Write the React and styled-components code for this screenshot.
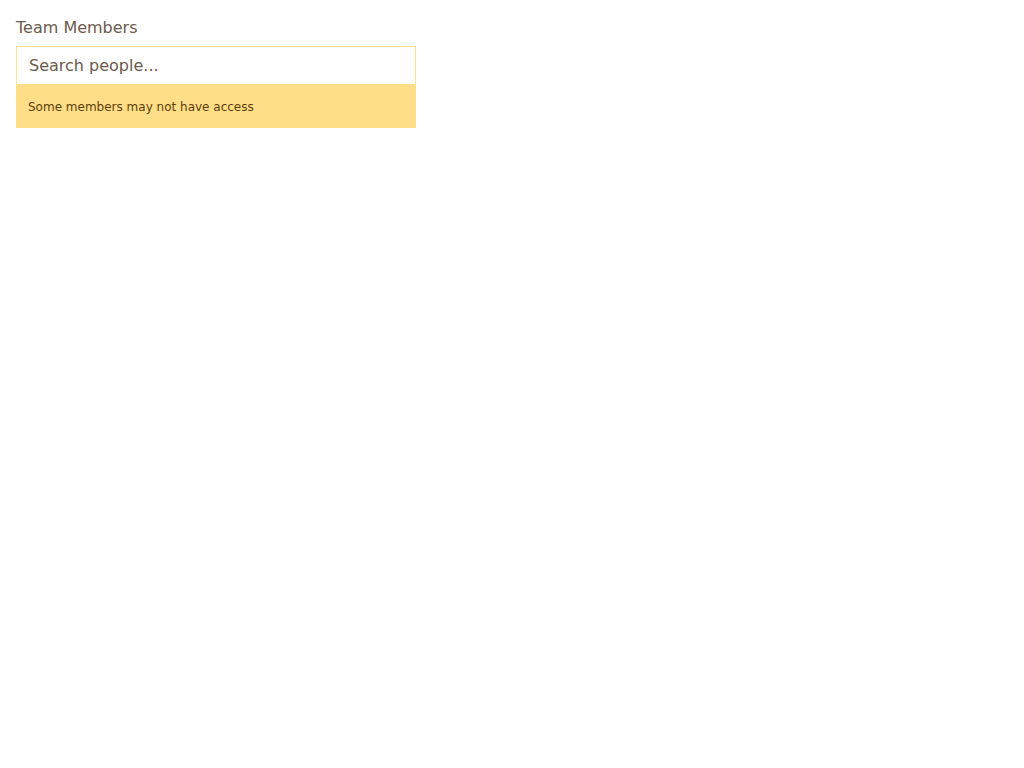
import React from "react";
import styled, { createGlobalStyle } from "styled-components";

const GlobalStyle = createGlobalStyle`
  body {
    margin: 0;
    background: #ffffff;
    font-family: "DejaVu Sans", sans-serif;
  }
`;

const Page = styled.div`
  padding: 16px;
`;

const Field = styled.div`
  width: 400px;
  display: flex;
  flex-direction: column;
`;

const Label = styled.label`
  display: block;
  font-size: 16px;
  line-height: 24px;
  color: #6b5a4b;
  margin-bottom: 6px;
`;

const SearchInput = styled.input`
  box-sizing: border-box;
  width: 100%;
  height: 39px;
  padding: 0 12px;
  border: 1px solid #fde08b;
  background: #ffffff;
  font-family: "DejaVu Sans", sans-serif;
  font-size: 16px;
  color: #5a4a3c;
  outline: none;

  &::placeholder {
    color: #6b5a4b;
  }
`;

const Notice = styled.div`
  background: #ffde88;
  color: #5c3d0a;
  font-size: 12px;
  line-height: 18px;
  padding: 13px 12px 12px;
`;

export default function App() {
  return (
    <>
      <GlobalStyle />
      <Page>
        <Field>
          <Label htmlFor="people">Team Members</Label>
          <SearchInput id="people" placeholder="Search people..." />
          <Notice>Some members may not have access</Notice>
        </Field>
      </Page>
    </>
  );
}
